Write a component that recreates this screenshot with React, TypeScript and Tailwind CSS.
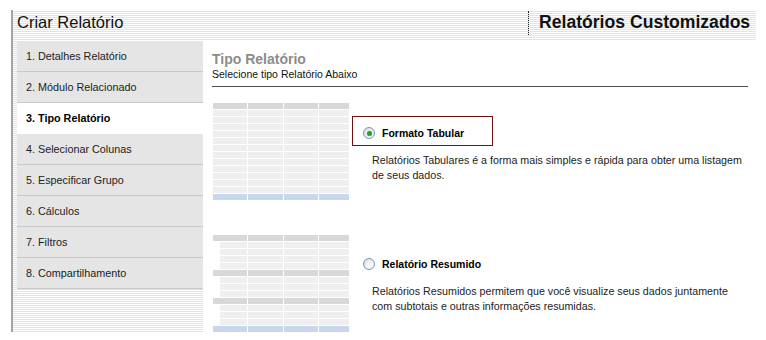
import React from 'react'

const stripes =
  'bg-[image:repeating-linear-gradient(to_bottom,#ffffff_0px,#ffffff_1px,#e3e3e3_1px,#e3e3e3_2px)]'

const steps = [
  '1. Detalhes Relatório',
  '2. Módulo Relacionado',
  '3. Tipo Relatório',
  '4. Selecionar Colunas',
  '5. Especificar Grupo',
  '6. Cálculos',
  '7. Filtros',
  '8. Compartilhamento',
]

// column boxes of the thumbnail tables: [x, width]
const cols: [number, number][] = [
  [0, 34],
  [35, 35],
  [71, 34],
  [106, 30],
]

type RowKind = 'h' | 'd' | 'sub' | 'b'

function TableThumb({ rows }: { rows: RowKind[] }) {
  const height = rows.length * 7 - 1
  return (
    <svg width="136" height={height} viewBox={`0 0 136 ${height}`} className="block shrink-0">
      {rows.map((kind, r) =>
        cols.map(([x, w], c) => {
          const fill = kind === 'h' ? '#d8d8d8' : kind === 'b' ? '#c9d7ee' : '#efefef'
          const indent = kind === 'sub' && c === 0 ? 7 : 0
          return <rect key={`${r}-${c}`} x={x + indent} y={r * 7} width={w - indent} height={6} fill={fill} />
        }),
      )}
    </svg>
  )
}

function Radio({ checked }: { checked?: boolean }) {
  return (
    <div className="w-[12px] h-[12px] shrink-0 rounded-full border border-[#7d94b0] bg-[radial-gradient(circle_at_65%_70%,#ffffff_0%,#eef0f3_45%,#cdd3dc_100%)] flex items-center justify-center">
      {checked && <div className="w-[5px] h-[5px] rounded-full bg-[#26a326] shadow-[0_0_1px_#7fd07f]" />}
    </div>
  )
}

export default function App() {
  const tabular: RowKind[] = ['h', ...Array(12).fill('d'), 'b']
  const resumido: RowKind[] = [
    'h', 'sub', 'sub', 'sub', 'sub',
    'h', 'sub', 'sub', 'sub',
    'h', 'sub', 'sub', 'sub',
    'b',
  ]

  return (
    <div className="w-[766px] h-[340px] bg-white pt-[10px] pl-[11px] text-[#1a1a1a] font-['Liberation_Sans',Arial,sans-serif]">
      <div className="w-[745px] border-l-2 border-[#a4a4a4]">
        {/* Header */}
        <div className={`h-[30px] flex overflow-hidden ${stripes}`}>
          <div className="w-[515px] shrink-0 pl-[4px] pt-[2px] text-[16.5px] leading-[20px] text-[#111]">Criar Relatório</div>
          <div className="mt-[1px] h-[24px] shrink-0 border-l border-dotted border-[#222]" />
          <div className="ml-[10px] pt-[2px] text-[17.6px] leading-[20px] font-bold text-[#111] whitespace-nowrap">
            Relatórios Customizados
          </div>
        </div>

        <div className="flex">
          {/* Steps */}
          <div className={`w-[190px] shrink-0 pl-[4px] pt-[1px] ${stripes}`}>
            {steps.map((s, i) => (
              <div
                key={s}
                className={`h-[31px] w-[186px] flex items-center pl-[9px] border-b text-[10.8px] ${
                  i === 2
                    ? 'bg-white border-white font-bold text-black'
                    : 'bg-[#e5e5e5] border-[#c9c9c9] text-[#222]'
                }`}
              >
                {s}
              </div>
            ))}
          </div>

          {/* Main */}
          <div className="flex-1 min-w-0 pl-[9px] pr-[8px] pt-[11px]">
            <div className="text-[14px] leading-[16px] font-bold text-[#8c8c8c]">Tipo Relatório</div>
            <div className="mt-[1px] text-[10.5px] leading-[12px] text-[#111]">Selecione tipo Relatório Abaixo</div>
            <div className="mt-[6px] border-t border-[#4f4f4f]" />

            <div className="mt-[16px] flex">
              <div className="ml-[1px]">
                <TableThumb rows={tabular} />
              </div>
              <div className="ml-[3px] pt-[13px]">
                <div className="w-[141px] h-[30px] border border-[#6e1111] flex items-center pl-[10px] pt-[4px]">
                  <Radio checked />
                  <span className="ml-[7px] text-[10.5px] leading-[12px] font-bold text-black">Formato Tabular</span>
                </div>
                <p className="ml-[20px] mt-[7px] w-[375px] whitespace-nowrap text-[10.7px] leading-[15px] text-[#222]">
                  Relatórios Tabulares é a forma mais simples e rápida para obter uma listagem
                  <br />
                  de seus dados.
                </p>
              </div>
            </div>

            <div className="mt-[35px] flex">
              <div className="ml-[1px]">
                <TableThumb rows={resumido} />
              </div>
              <div className="ml-[3px] pt-[12px]">
                <div className="w-[141px] h-[30px] border border-transparent flex items-center pl-[10px] pt-[4px]">
                  <Radio />
                  <span className="ml-[7px] text-[10.5px] leading-[12px] font-bold text-black whitespace-nowrap">
                    Relatório Resumido
                  </span>
                </div>
                <p className="ml-[20px] mt-[7px] w-[375px] whitespace-nowrap text-[10.7px] leading-[15px] text-[#222]">
                  Relatórios Resumidos permitem que você visualize seus dados juntamente
                  <br />
                  com subtotais e outras informações resumidas.
                </p>
              </div>
            </div>
          </div>
        </div>
      </div>
    </div>
  )
}
